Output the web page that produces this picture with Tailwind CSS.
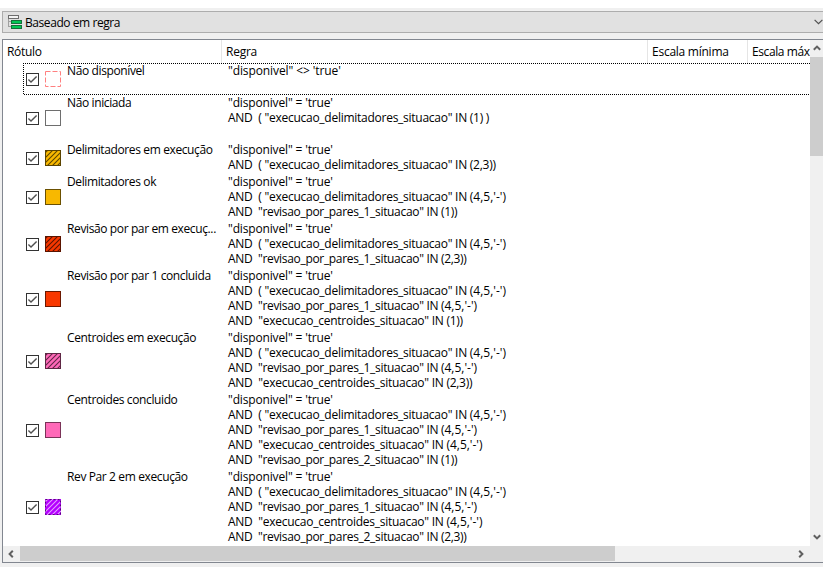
<!DOCTYPE html>
<html lang="pt-BR">
<head>
<meta charset="utf-8">
<title>Simbologia</title>
<script src="https://cdn.jsdelivr.net/npm/@tailwindcss/browser@4"></script>
</head>
<body class="w-[823px] h-[567px] overflow-hidden bg-white pt-2 text-black text-[12px] leading-[15px] font-['Open_Sans','Noto_Sans',sans-serif]">
<div class="flex h-[559px] flex-col bg-[#f0f0f0] pl-[2px] pt-[3px]">
  <div class="flex h-[22px] shrink-0 items-center border border-r-0 border-[#adadad] bg-[#e1e1e1] pl-[5px]">
    <svg class="mr-[3px] h-4 w-[14px] shrink-0" viewBox="0 0 14 16" fill="none" shape-rendering="crispEdges">
      <path d="M.5 4V12.500H3M.5 7.500H3" stroke="#a0a0a0"/>
      <rect x=".5" y="1.500" width="10" height="3" fill="#f4f4f4" stroke="#6e6e6e"/>
      <rect x="3.500" y="6.500" width="10" height="3" fill="#00c853" stroke="#14703a"/>
      <rect x="3.500" y="11.500" width="10" height="3" fill="#00c853" stroke="#14703a"/>
    </svg>
    <div class="grow whitespace-nowrap tracking-[-0.43px]">Baseado em regra</div>
    <svg class="mr-0 h-[6px] w-[9px] shrink-0" viewBox="0 0 9 6" fill="none"><path d="M.6 .8L4.500 4.700L8.400 .8" stroke="#505050" stroke-width="1.200"/></svg>
  </div>
  <div class="mt-[6px] flex h-[524px] shrink-0 flex-col border border-r-0 border-[#828790] bg-white">
    <div class="flex h-[506px] shrink-0">
      <div class="flex w-[807px] shrink-0 flex-col overflow-hidden">
        <div class="flex h-[23px] shrink-0 items-center whitespace-nowrap tracking-[-0.25px]">
          <div class="flex h-full w-[219px] shrink-0 items-center border-r border-[#e5e5e5] pl-1 tracking-[-0.3px]">Rótulo</div>
          <div class="flex h-full w-[426px] shrink-0 items-center border-r border-[#e5e5e5] pl-1">Regra</div>
          <div class="flex h-full w-[100px] shrink-0 items-center border-r border-[#e5e5e5] pl-1">Escala mínima</div>
          <div class="flex h-full w-[61px] shrink-0 items-center pl-1 tracking-[-0.4px]">Escala máx</div>
        </div>
        <div id="rules" class="flex h-[483px] shrink-0 flex-col overflow-hidden"></div>
      </div>
      <div class="flex grow flex-col items-center bg-[#f0f0f0]">
        <div class="flex h-[17px] w-full items-center justify-center pb-px pl-px"><svg class="h-[6px] w-[8px]" viewBox="0 0 8 6" fill="none"><path d="M.8 4.800L4 1.600L7.200 4.800" stroke="#606060" stroke-width="2"/></svg></div>
        <div class="h-[99px] w-full bg-[#cdcdcd]"></div>
        <div class="mt-auto flex h-[17px] w-full items-center justify-center pb-[2px] pl-px"><svg class="h-[6px] w-[8px]" viewBox="0 0 8 6" fill="none"><path d="M.8 1.200L4 4.400L7.200 1.200" stroke="#606060" stroke-width="2"/></svg></div>
      </div>
    </div>
    <div class="flex grow items-stretch bg-[#f0f0f0]">
      <div class="flex w-[17px] items-center justify-center pb-px pr-px"><svg class="h-[8px] w-[6px]" viewBox="0 0 6 8" fill="none"><path d="M4.800 .8L1.600 4L4.800 7.200" stroke="#606060" stroke-width="2"/></svg></div>
      <div class="mb-px w-[595px] bg-[#cdcdcd]"></div>
      <div class="ml-[177px] flex w-[17px] items-center justify-center pb-px"><svg class="h-[8px] w-[6px]" viewBox="0 0 6 8" fill="none"><path d="M1.200 .8L4.400 4L1.200 7.200" stroke="#606060" stroke-width="2"/></svg></div>
    </div>
  </div>
</div>
<script>
const tight = s => `<div class="tracking-[-0.32px]">${s}</div>`;
const medium = s => `<div class="tracking-[-0.26px]">${s}</div>`;
const D = `<div class="tracking-[-0.15px]">"disponivel" = 'true'</div>`;
const L = v => medium(`AND  ( "execucao_delimitadores_situacao" IN ${v}`);
const R = (n, v) => tight(`AND  "revisao_por_pares_${n}_situacao" IN ${v}`);
const C = v => medium(`AND  "execucao_centroides_situacao" IN ${v}`);
const P = `<span class="tracking-[0px]">(4,5,'-')</span>`;
const rows = [
  { h: 32, t: 'Não disponível', k: 'dash', r: [`<div class="tracking-[-0.1px]">"disponivel" &lt;&gt; 'true'</div>`] },
  { h: 47, t: 'Não iniciada', k: 'solid', f: '#ffffff', s: '#6e6e6e', r: [D, L('(1) )')] },
  { h: 32, t: 'Delimitadores em execução', k: 'hatch', f: '#f8b800', s: '#5a4300', r: [D, L('(2,3))')] },
  { h: 47, t: 'Delimitadores ok', k: 'solid', f: '#f8b800', s: '#6b5000', r: [D, L(P), R(1, '(1))')] },
  { h: 47, t: 'Revisão por par em execuç...', k: 'hatch', f: '#f83800', s: '#5a1400', r: [D, L(P), R(1, '(2,3))')] },
  { h: 62, t: 'Revisão por par 1 concluida', k: 'solid', f: '#f83800', s: '#6b1800', r: [D, L(P), R(1, P), C('(1))')] },
  { h: 62, t: 'Centroides em execução', k: 'hatch', f: '#ff69b8', s: '#5e2744', r: [D, L(P), R(1, P), C('(2,3))')] },
  { h: 77, t: 'Centroides concluido', k: 'solid', f: '#ff69b8', s: '#7a3358', r: [D, L(P), R(1, P), C(P), R(2, '(1))')] },
  { h: 77, t: 'Rev Par 2 em execução', k: 'violet', f: '#b400ff', s: '#e6a0ff', r: [D, L(P), R(1, P), C(P), R(2, '(2,3))')] }
];
const hatch = s => [3,8,13,18,23,28].map(n => `<path d="M${n-17} 17L${n+1} -1" stroke="${s}" stroke-width="1.100"/>`).join('');
const swatch = o => {
  const open = '<svg class="ml-[6px] h-4 w-4 shrink-0" viewBox="0 0 16 16" fill="none">';
  if (o.k === 'dash') return open + '<rect x=".5" y=".5" width="15" height="15" stroke="#ff7f7f" stroke-dasharray="5 2"/></svg>';
  if (o.k === 'solid') return open + `<rect x=".5" y=".5" width="15" height="15" fill="${o.f}" stroke="${o.s}"/></svg>`;
  if (o.k === 'violet') return open + `<rect width="16" height="16" fill="${o.f}"/>${hatch(o.s)}<rect x=".5" y=".5" width="15" height="15" stroke="#5a0080" stroke-dasharray="2 2"/></svg>`;
  return open + `<rect width="16" height="16" fill="${o.f}"/>${hatch(o.s)}<rect x=".5" y=".5" width="15" height="15" stroke="${o.s}"/></svg>`;
};
const check = '<svg class="mt-[2px] h-[13px] w-[13px] shrink-0" viewBox="0 0 13 13" fill="none"><rect x=".5" y=".5" width="12" height="12" fill="#fff" stroke="#333"/><path d="M2.400 6.500L5 9L10.600 3.400" stroke="#505050" stroke-width="1.400"/></svg>';
document.getElementById('rules').innerHTML = rows.map((o, i) => `
<div class="relative flex shrink-0 pl-[23px]" style="height:${o.h}px">
  ${i ? '' : '<svg class="absolute left-[20px] top-0 h-[32px] w-[787px]" fill="none" stroke="#000" stroke-dasharray="1 1" shape-rendering="crispEdges"><path d="M0 .5H787M1 31.500H787M.5 0V32"/></svg>'}
  <div class="flex w-[41px] shrink-0 items-start" style="padding-top:${Math.floor(o.h / 2) - 8}px">${check}${swatch(o)}</div>
  <div class="w-[161px] shrink-0 whitespace-pre tracking-[-0.38px]">${o.t}</div>
  <div class="shrink-0 whitespace-pre">${o.r.join('')}</div>
</div>`).join('');
</script>
</body>
</html>
